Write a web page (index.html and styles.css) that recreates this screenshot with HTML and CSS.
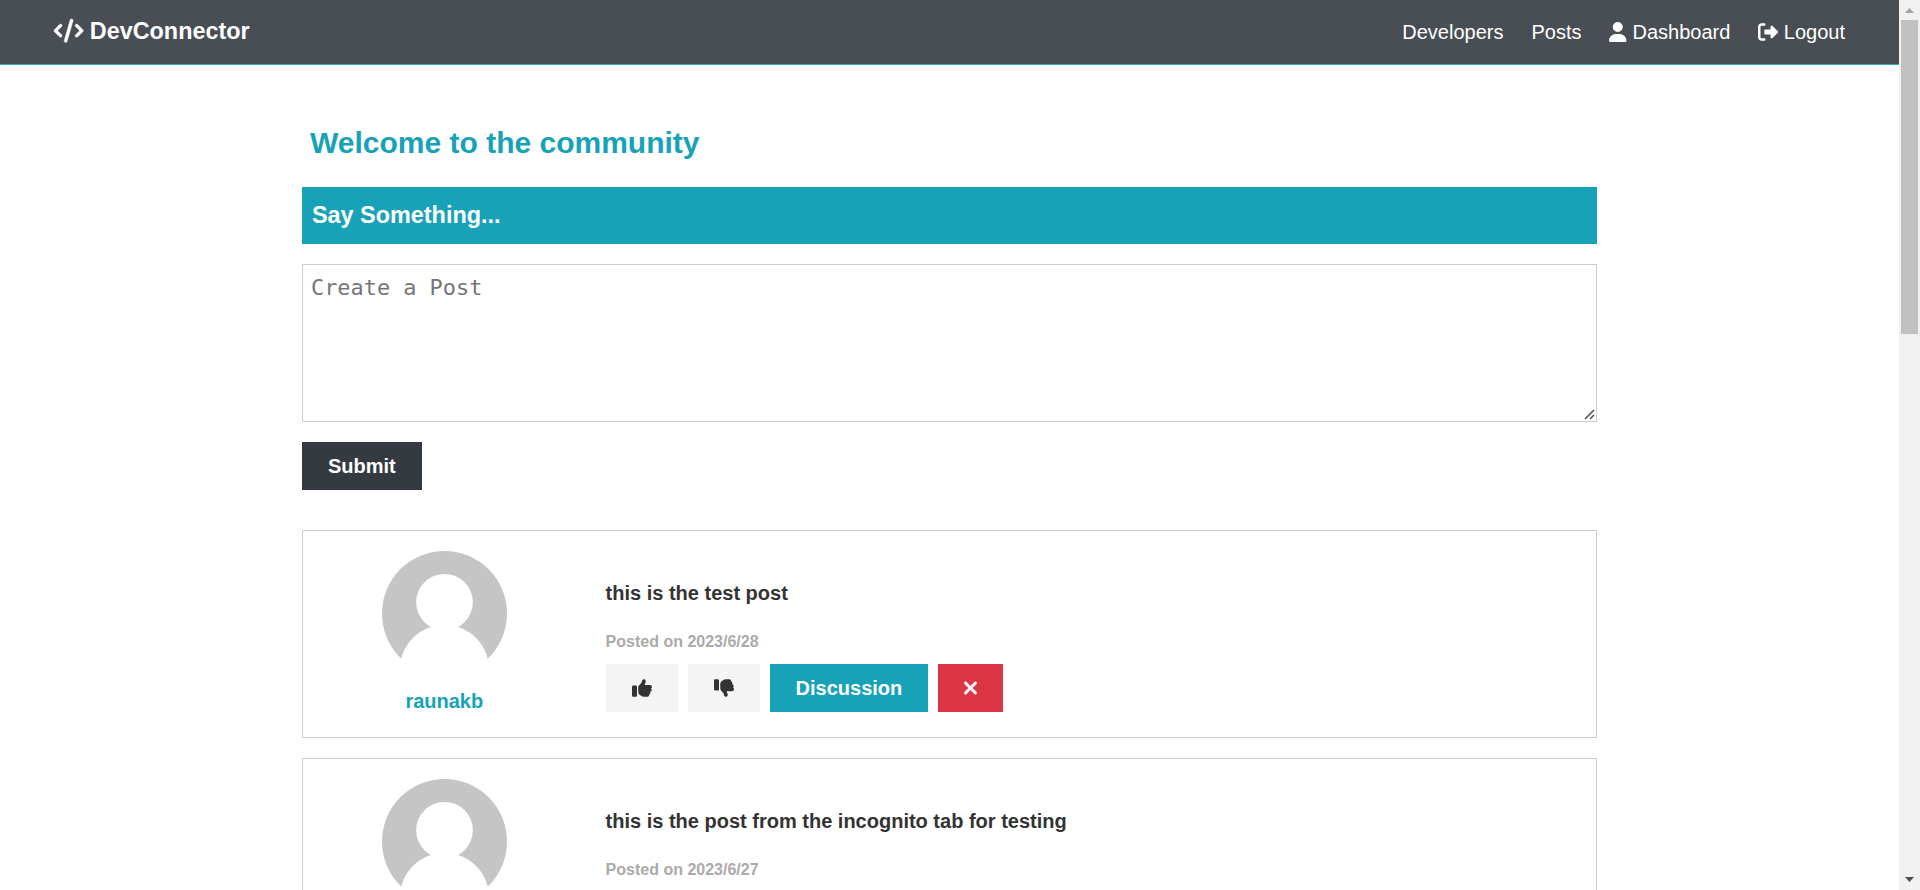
FILE: index.html
```html
<!DOCTYPE html>
<html lang="en">
<head>
<meta charset="utf-8">
<title>DevConnector</title>
<link rel="stylesheet" href="styles.css">
</head>
<body>
<svg class="defs" aria-hidden="true">
  <symbol id="avatar" viewBox="0 0 125 125">
    <circle cx="62.5" cy="62.5" r="62.5" fill="#c5c5c5"/>
    <circle cx="62.5" cy="51.2" r="28.3" fill="#fff"/>
    <circle cx="62.5" cy="118.5" r="44.7" fill="#fff"/>
  </symbol>
  <symbol id="thumb" viewBox="0 0 512 512">
    <path d="M313.4 32.9c26 5.2 42.9 30.5 37.7 56.5l-2.3 11.4c-5.3 26.7-15.1 52.1-28.8 75.2H464c26.5 0 48 21.5 48 48c0 18.5-10.5 34.6-25.9 42.6C497 275.4 504 288.9 504 304c0 23.4-16.8 42.9-38.9 47.1c4.4 7.3 6.9 15.8 6.9 24.9c0 21.3-13.9 39.4-33.1 45.6c.7 3.3 1.1 6.8 1.1 10.4c0 26.5-21.5 48-48 48H294.5c-19 0-37.5-5.6-53.3-16.1l-38.5-25.7C176 420.4 160 390.4 160 358.3V320 272 247.1c0-29.2 13.3-56.7 36-75l7.4-5.9c26.5-21.2 44.6-51 51.2-84.2l2.3-11.4c5.2-26 30.5-42.9 56.5-37.7zM32 192H96c17.7 0 32 14.3 32 32V448c0 17.7-14.3 32-32 32H32c-17.7 0-32-14.3-32-32V224c0-17.7 14.3-32 32-32z"/>
  </symbol>
  <symbol id="xmark" viewBox="0 0 320 512">
    <path d="M310.6 150.6c12.5-12.5 12.5-32.8 0-45.3s-32.8-12.5-45.3 0L160 210.7 54.6 105.4c-12.5-12.5-32.8-12.5-45.3 0s-12.5 32.8 0 45.3L114.7 256 9.4 361.4c-12.5 12.5-12.5 32.8 0 45.3s32.8 12.5 45.3 0L160 301.3 265.4 406.6c12.5 12.5 32.8 12.5 45.3 0s12.5-32.8 0-45.3L205.3 256 310.6 150.6z"/>
  </symbol>
</svg>
<div class="window">
  <div class="page">
    <nav class="navbar">
      <h1 class="brand">
        <svg class="icon-code" viewBox="0 0 640 512"><path d="M392.8 1.2c-17-4.9-34.7 5-39.6 22l-128 448c-4.9 17 5 34.7 22 39.6s34.7-5 39.6-22l128-448c4.9-17-5-34.7-22-39.6zm80.6 120.1c-12.5 12.5-12.5 32.8 0 45.3L562.7 256l-89.4 89.4c-12.5 12.5-12.5 32.8 0 45.3s32.8 12.5 45.3 0l112-112c12.5-12.5 12.5-32.8 0-45.3l-112-112c-12.5-12.5-32.8-12.5-45.3 0zm-306.7 0c-12.5-12.5-32.8-12.5-45.3 0l-112 112c-12.5 12.5-12.5 32.8 0 45.3l112 112c12.5 12.5 32.8 12.5 45.3 0s12.5-32.8 0-45.3L77.3 256l89.4-89.4c12.5-12.5 12.5-32.8 0-45.3z"/></svg>
        <span>DevConnector</span>
      </h1>
      <ul class="nav-links">
        <li>Developers</li>
        <li>Posts</li>
        <li>
          <svg class="icon-user" viewBox="0 0 448 512"><path d="M224 256A128 128 0 1 0 224 0a128 128 0 1 0 0 256zm-45.7 48C79.8 304 0 383.8 0 482.3C0 498.7 13.3 512 29.7 512H418.3c16.4 0 29.7-13.3 29.7-29.7C448 383.8 368.2 304 269.7 304H178.3z"/></svg>
          <span>Dashboard</span>
        </li>
        <li>
          <svg class="icon-logout" viewBox="0 0 512 512"><path d="M377.9 105.9L500.7 228.7c7.2 7.2 11.3 17.1 11.3 27.3s-4.1 20.1-11.3 27.3L377.9 406.1c-6.4 6.4-15 9.9-24 9.9c-18.7 0-33.9-15.2-33.9-33.9l0-62.1-128 0c-17.7 0-32-14.3-32-32l0-64c0-17.7 14.3-32 32-32l128 0 0-62.1c0-18.7 15.2-33.9 33.9-33.9c9 0 17.6 3.6 24 9.9zM160 96L96 96c-17.7 0-32 14.3-32 32l0 256c0 17.7 14.3 32 32 32l64 0c17.7 0 32 14.3 32 32s-14.3 32-32 32l-64 0c-53 0-96-43-96-96L0 128C0 75 43 32 96 32l64 0c17.7 0 32 14.3 32 32s-14.3 32-32 32z"/></svg>
          <span>Logout</span>
        </li>
      </ul>
    </nav>
    <main class="container">
      <h2 class="title">Welcome to the community</h2>
      <div class="banner"><h3>Say Something...</h3></div>
      <div class="field">
        <textarea class="post-input" placeholder="Create a Post"></textarea>
        <svg class="grip" viewBox="0 0 11 11"><path d="M1 10L10 1M6 10L10 6"/></svg>
      </div>
      <button class="btn btn-dark">Submit</button>
      <section class="posts">
        <article class="post">
          <div class="author">
            <svg class="avatar"><use href="#avatar"/></svg>
            <h4>raunakb</h4>
          </div>
          <div class="body">
            <p class="text">this is the test post</p>
            <p class="date">Posted on 2023/6/28</p>
            <div class="actions">
              <button class="btn btn-light"><svg class="icon"><use href="#thumb"/></svg></button>
              <button class="btn btn-light"><svg class="icon flipped"><use href="#thumb"/></svg></button>
              <button class="btn btn-primary">Discussion</button>
              <button class="btn btn-danger"><svg class="icon icon-x"><use href="#xmark"/></svg></button>
            </div>
          </div>
        </article>
        <article class="post">
          <div class="author">
            <svg class="avatar"><use href="#avatar"/></svg>
          </div>
          <div class="body">
            <p class="text">this is the post from the incognito tab for testing</p>
            <p class="date">Posted on 2023/6/27</p>
          </div>
        </article>
      </section>
    </main>
  </div>
  <div class="scrollbar">
    <svg class="arrow" viewBox="0 0 21 20"><path d="M6 13h9L10.5 8z" fill="#a3a3a3"/></svg>
    <div class="thumb"></div>
    <svg class="arrow arrow-down" viewBox="0 0 21 20"><path d="M6 7h9L10.5 12z" fill="#505050"/></svg>
  </div>
</div>
</body>
</html>
```
FILE: styles.css
```css
* {
  box-sizing: border-box;
  margin: 0;
  padding: 0;
}

body {
  font-family: "Liberation Sans", Arial, sans-serif;
  font-size: 20px;
  line-height: 1.6;
  color: #333;
  background: #fff;
  overflow: hidden;
}

.defs {
  display: none;
}

.window {
  display: flex;
  height: 890px;
  overflow: hidden;
}

.page {
  flex: 1;
  overflow: hidden;
}

.navbar {
  display: flex;
  justify-content: space-between;
  align-items: center;
  height: 65px;
  padding: 0 54px 0 53.5px;
  color: #fff;
  background: #484e53;
  border-bottom: 1px solid #2eabbf;
}

.navbar svg {
  fill: #fff;
}

.brand {
  display: flex;
  align-items: center;
  gap: 7px;
  font-size: 23.4px;
  line-height: 37px;
  padding-bottom: 2px;
}

.icon-code {
  width: 29.25px;
  height: 23.4px;
  overflow: visible;
  stroke: #fff;
  stroke-width: 12;
}

.nav-links {
  display: flex;
  gap: 28px;
  list-style: none;
}

.nav-links li {
  display: flex;
  align-items: center;
  gap: 5.5px;
}

.icon-user {
  width: 17.5px;
  height: 20px;
}

.icon-logout {
  width: 20px;
  height: 20px;
}

.container {
  width: 1295px;
  margin: 0 auto;
  padding-top: 54px;
}

.title {
  padding-left: 8px;
  margin-bottom: 20px;
  font-size: 30px;
  line-height: 48px;
  color: #17a2b8;
}

.banner {
  height: 57px;
  padding: 10px;
  margin-bottom: 20px;
  color: #fff;
  background: #17a2b8;
}

.banner h3 {
  font-size: 23.4px;
  line-height: 37px;
}

.field {
  position: relative;
  height: 158px;
  margin-bottom: 20px;
}

.post-input {
  display: block;
  width: 100%;
  height: 100%;
  padding: 9px 8px 8px;
  font-family: "DejaVu Sans Mono", monospace;
  font-size: 21.9px;
  line-height: 28px;
  border: 1px solid #ccc;
  resize: none;
}

.post-input::placeholder {
  color: #757575;
}

.grip {
  position: absolute;
  right: 2px;
  bottom: 2px;
  width: 11px;
  height: 11px;
  fill: none;
  stroke: #555;
  stroke-width: 1.7;
}

.btn {
  display: flex;
  align-items: center;
  height: 48px;
  padding: 8px 26px;
  font: bold 20px/32px "Liberation Sans", Arial, sans-serif;
  border: none;
}

.btn-dark {
  color: #fff;
  background: #343a40;
}

.btn-light {
  color: #333;
  background: #f4f4f4;
}

.btn-primary {
  color: #fff;
  background: #17a2b8;
}

.btn-danger {
  color: #fff;
  background: #dc3545;
}

.icon {
  width: 20px;
  height: 20px;
  margin-bottom: 1px;
  fill: currentColor;
}

.flipped {
  transform: scaleY(-1);
}

.icon-x {
  width: 13px;
  overflow: visible;
  stroke: currentColor;
  stroke-width: 14;
}

.posts {
  display: grid;
  gap: 20px;
  margin-top: 40px;
}

.post {
  display: grid;
  grid-template-columns: 1fr 4fr;
  gap: 40px;
  height: 208px;
  padding: 20px;
  border: 1px solid #ccc;
}

.author {
  display: flex;
  flex-direction: column;
  align-items: center;
  gap: 9px;
  color: #17a2b8;
}

.avatar {
  width: 125px;
  height: 125px;
}

.body {
  padding-top: 26px;
}

.text {
  margin-bottom: 20px;
  font-weight: bold;
}

.date {
  margin-bottom: 9px;
  font-size: 16px;
  font-weight: bold;
  line-height: 26px;
  color: #aaa;
}

.actions {
  display: flex;
  gap: 10px;
}

.scrollbar {
  display: flex;
  flex-direction: column;
  align-items: center;
  width: 21px;
  background: #f1f1f1;
}

.arrow {
  width: 21px;
  height: 20px;
}

.thumb {
  width: 17px;
  height: 314px;
  background: #c1c1c1;
}

.arrow-down {
  margin-top: auto;
}
```
